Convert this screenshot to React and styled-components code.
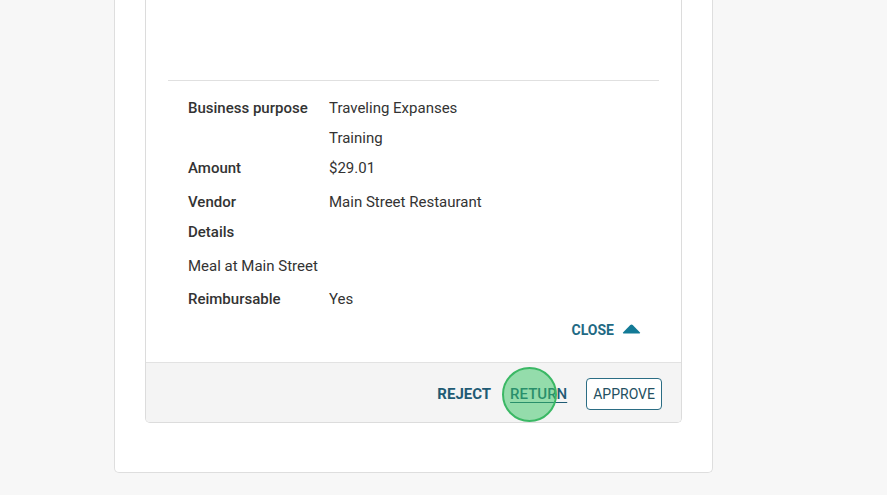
import React from 'react';
import styled, { createGlobalStyle } from 'styled-components';

const GlobalStyle = createGlobalStyle`
  body {
    margin: 0;
    background: #f7f7f7;
    font-family: Roboto, "Liberation Sans", Arial, sans-serif;
    color: #333;
  }
`;

const details = [
  { label: 'Business purpose', values: ['Traveling Expanses', 'Training'] },
  { label: 'Amount', values: ['$29.01'] },
  { label: 'Vendor', values: ['Main Street Restaurant'], space: 4 },
  { label: 'Details', values: [] },
  { label: 'Meal at Main Street', values: [], plain: true, space: 4 },
  { label: 'Reimbursable', values: ['Yes'], space: 3 },
];

function App() {
  return (
    <>
      <GlobalStyle />
      <Page>
        <OuterCard>
          <ExpenseCard>
            <Body>
              <Spacer />
              <Divider />
              <DetailList>
                {details.map((d) => (
                  <Row key={d.label} $space={d.space || 0}>
                    <Label $plain={d.plain}>{d.label}</Label>
                    <Values>
                      {d.values.map((v) => (
                        <span key={v}>{v}</span>
                      ))}
                    </Values>
                  </Row>
                ))}
              </DetailList>
              <CloseRow>
                <CloseButton type="button">
                  CLOSE
                  <svg width="19" height="10" viewBox="0 0 19 10">
                    <path d="M8.3 1 Q9.5 -0.2 10.7 1 L18 8.4 Q18.6 9.5 17.4 9.5 L1.6 9.5 Q0.4 9.5 1 8.4 Z" fill="#137a96" />
                  </svg>
                </CloseButton>
              </CloseRow>
            </Body>
            <Footer>
              <TextButton type="button">REJECT</TextButton>
              <TextButton type="button" $underline>
                RETURN
                <ClickMark />
              </TextButton>
              <OutlineButton type="button">APPROVE</OutlineButton>
            </Footer>
          </ExpenseCard>
        </OuterCard>
      </Page>
    </>
  );
}

export default App;

const Page = styled.div`
  width: 887px;
  height: 495px;
  overflow: hidden;
`;

const OuterCard = styled.div`
  margin-left: 114px;
  width: 599px;
  box-sizing: border-box;
  background: #fff;
  border: 1px solid #dedede;
  border-top: none;
  border-radius: 0 0 5px 5px;
  padding: 0 30px 49px 30px;
`;

const ExpenseCard = styled.div`
  background: #fff;
  border: 1px solid #dcdcdc;
  border-top: none;
  border-radius: 0 0 5px 5px;
  overflow: hidden;
`;

const Body = styled.div`
  padding: 0 22px;
`;

const Spacer = styled.div`
  height: 80px;
`;

const Divider = styled.div`
  height: 1px;
  background: #e0e0e0;
`;

const DetailList = styled.div`
  padding: 12px 0 0 20px;
  font-size: 15px;
  line-height: 30px;
`;

const Row = styled.div`
  display: flex;
  margin-top: ${(p) => p.$space}px;
`;

const Label = styled.div`
  width: 141px;
  flex-shrink: 0;
  font-weight: ${(p) => (p.$plain ? 400 : 500)};
  color: #333;
  white-space: nowrap;
`;

const Values = styled.div`
  display: flex;
  flex-direction: column;
  color: #333;
`;

const CloseRow = styled.div`
  display: flex;
  justify-content: flex-end;
  padding: 1px 18px 17px 0;
`;

const CloseButton = styled.button`
  display: flex;
  align-items: center;
  gap: 8px;
  height: 30px;
  padding: 0;
  border: none;
  background: none;
  font-family: inherit;
  font-size: 14px;
  font-weight: 700;
  color: #1f6a84;
  svg {
    margin-top: -3px;
  }
`;

const Footer = styled.div`
  display: flex;
  justify-content: flex-end;
  align-items: center;
  gap: 19px;
  height: 60px;
  box-sizing: border-box;
  padding: 2px 19px 0 0;
  background: #f4f4f4;
  border-top: 1px solid #e2e2e2;
`;

const TextButton = styled.button`
  position: relative;
  padding: 0;
  border: none;
  background: none;
  font-family: inherit;
  font-size: 15px;
  font-weight: ${(p) => (p.$underline ? 500 : 700)};
  color: #1f5b74;
  text-decoration: ${(p) => (p.$underline ? 'underline' : 'none')};
  text-underline-offset: 3px;
  margin-top: 1px;
`;

const ClickMark = styled.span`
  position: absolute;
  left: -8px;
  top: 50%;
  width: 51px;
  height: 51px;
  margin-top: -27px;
  border-radius: 50%;
  background: rgba(52, 196, 98, 0.5);
  border: 2px solid #3bb865;
`;

const OutlineButton = styled.button`
  height: 32px;
  padding: 0 6px;
  border: 1px solid #2b6d84;
  border-radius: 4px;
  background: #fff;
  font-family: inherit;
  font-size: 14px;
  color: #244f61;
`;
